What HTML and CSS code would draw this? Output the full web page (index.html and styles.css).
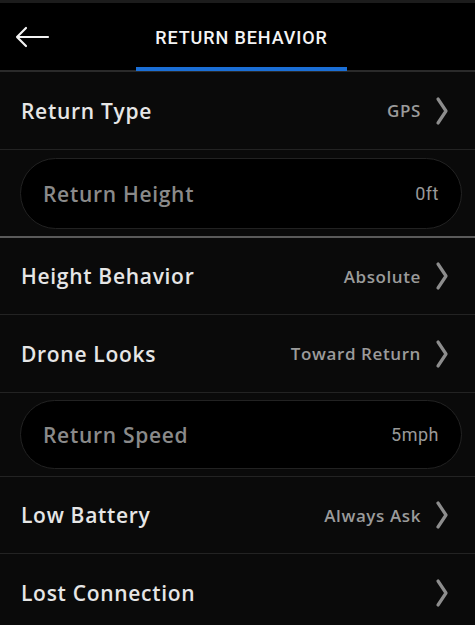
FILE: index.html
```html
<!DOCTYPE html>
<html lang="en">
<head>
    <meta charset="UTF-8">
    <meta name="viewport" content="width=device-width, initial-scale=1.0">
    <title>Return Behavior</title>
    <link rel="stylesheet" href="styles.css">
</head>
<body>
    <div class="screen">
        <header class="topbar">
            <button class="back" aria-label="Back">
                <svg width="36" height="22" viewBox="0 0 36 22">
                    <path d="M34 11H3M12 2L3 11l9 9" fill="none" stroke="#f2f2f2" stroke-width="2.2" stroke-linecap="round" stroke-linejoin="round"/>
                </svg>
            </button>
            <div class="tab">RETURN BEHAVIOR</div>
        </header>

        <div class="list">
            <div class="row">
                <span class="label">Return Type</span>
                <span class="value">GPS</span>
                <span class="chev"><svg width="14" height="30" viewBox="0 0 14 30"><path d="M3 3l8 12-8 12" fill="none" stroke="#8d8d8d" stroke-width="3.2" stroke-linecap="round" stroke-linejoin="round"/></svg></span>
            </div>
            <div class="pill-wrap first">
                <div class="pill">
                    <span class="label">Return Height</span>
                    <span class="num">0ft</span>
                </div>
            </div>
            <div class="row short">
                <span class="label">Height Behavior</span>
                <span class="value">Absolute</span>
                <span class="chev"><svg width="14" height="30" viewBox="0 0 14 30"><path d="M3 3l8 12-8 12" fill="none" stroke="#8d8d8d" stroke-width="3.2" stroke-linecap="round" stroke-linejoin="round"/></svg></span>
            </div>
            <div class="row">
                <span class="label">Drone Looks</span>
                <span class="value">Toward Return</span>
                <span class="chev"><svg width="14" height="30" viewBox="0 0 14 30"><path d="M3 3l8 12-8 12" fill="none" stroke="#8d8d8d" stroke-width="3.2" stroke-linecap="round" stroke-linejoin="round"/></svg></span>
            </div>
            <div class="pill-wrap second">
                <div class="pill">
                    <span class="label">Return Speed</span>
                    <span class="num">5mph</span>
                </div>
            </div>
            <div class="row short">
                <span class="label">Low Battery</span>
                <span class="value">Always Ask</span>
                <span class="chev"><svg width="14" height="30" viewBox="0 0 14 30"><path d="M3 3l8 12-8 12" fill="none" stroke="#8d8d8d" stroke-width="3.2" stroke-linecap="round" stroke-linejoin="round"/></svg></span>
            </div>
            <div class="row last">
                <span class="label">Lost Connection</span>
                <span class="value"></span>
                <span class="chev"><svg width="14" height="30" viewBox="0 0 14 30"><path d="M3 3l8 12-8 12" fill="none" stroke="#8d8d8d" stroke-width="3.2" stroke-linecap="round" stroke-linejoin="round"/></svg></span>
            </div>
        </div>
    </div>
</body>
</html>
```

FILE: styles.css
```css
body {
    margin: 0;
    background-color: #0a0a0a;
    font-family: 'Open Sans', 'Lato', sans-serif;
    color: #e8e8e8;
}
.screen {
    width: 475px;
    height: 625px;
    overflow: hidden;
    background-color: #0a0a0a;
    border-top: 3px solid #1c1c1c;
    box-sizing: border-box;
}
.topbar {
    height: 67px;
    background-color: #000;
    display: flex;
    align-items: stretch;
    border-bottom: 2px solid #2a2a2a;
}
.back {
    background: none;
    border: none;
    padding: 0 0 0 14px;
    width: 136px;
    display: flex;
    align-items: center;
    justify-content: flex-start;
    cursor: pointer;
}
.tab {
    width: 211px;
    box-sizing: border-box;
    display: flex;
    align-items: center;
    justify-content: center;
    font-family: 'Roboto', sans-serif;
    font-weight: 500;
    font-size: 18px;
    letter-spacing: 0.9px;
    color: #f4f4f4;
    border-bottom: 4px solid #1b6fd6;
    padding-top: 5px;
    margin-bottom: -1px;
}
.list {
    display: flex;
    flex-direction: column;
}
.row {
    height: 77px;
    display: flex;
    align-items: center;
    padding: 0 26px 0 21px;
    border-bottom: 1px solid #232323;
}
.row.short {
    height: 76px;
}
.row .label {
    flex: 1;
    font-size: 21px;
    font-weight: 600;
    letter-spacing: 0.7px;
    color: #e6e6e6;
}
.value {
    font-size: 17px;
    font-weight: 600;
    letter-spacing: 0.6px;
    color: #9b9b9b;
    margin-right: 14px;
}
.chev {
    display: flex;
    align-items: center;
}
.pill-wrap {
    padding: 7px 13px 7px 20px;
    border-bottom: 1px solid #232323;
}
.pill-wrap.first {
    padding-top: 8px;
    border-bottom: 2px solid #5a5a5a;
}
.pill {
    box-sizing: border-box;
    height: 69px;
    border-radius: 36px;
    border: 1px solid #222;
    background-color: #000;
    display: flex;
    align-items: center;
    padding: 0 22px 0 22px;
}
.pill-wrap.first .pill {
    height: 71px;
}
.pill .label {
    flex: 1;
    font-size: 21px;
    font-weight: 600;
    letter-spacing: 0.7px;
    color: #8a8a8a;
}
.num {
    font-family: 'Roboto', sans-serif;
    font-size: 18px;
    letter-spacing: 0.5px;
    color: #999;
}
.row.last {
    border-bottom: none;
}
```
